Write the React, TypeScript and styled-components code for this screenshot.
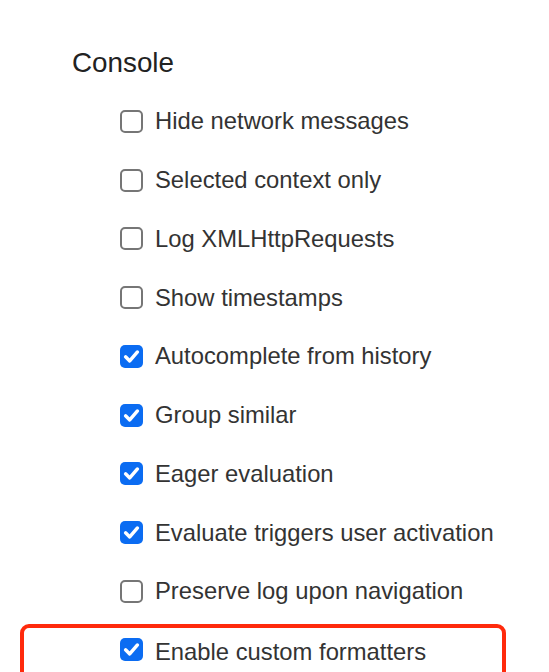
import React from 'react';
import styled, { createGlobalStyle } from 'styled-components';

const GlobalStyle = createGlobalStyle`
  html, body {
    margin: 0;
    padding: 0;
    background: #fff;
    overflow: hidden;
  }
  body {
    font-family: 'Liberation Sans', Arial, Helvetica, sans-serif;
    color: #303030;
  }
`;

type Setting = {
  label: string;
  checked: boolean;
  highlight?: boolean;
};

const settings: Setting[] = [
  { label: 'Hide network messages', checked: false },
  { label: 'Selected context only', checked: false },
  { label: 'Log XMLHttpRequests', checked: false },
  { label: 'Show timestamps', checked: false },
  { label: 'Autocomplete from history', checked: true },
  { label: 'Group similar', checked: true },
  { label: 'Eager evaluation', checked: true },
  { label: 'Evaluate triggers user activation', checked: true },
  { label: 'Preserve log upon navigation', checked: false },
  { label: 'Enable custom formatters', checked: true, highlight: true }
];

const Page = styled.div`
  width: 549px;
  height: 672px;
  overflow: hidden;
  padding-left: 72px;
  box-sizing: border-box;
`;

const Heading = styled.h2`
  margin: 0;
  margin-top: 33px;
  font-size: 27.8px;
  font-weight: 400;
  line-height: 59px;
  color: #222;
`;

const List = styled.div`
  display: flex;
  flex-direction: column;
  padding-left: 48px;
`;

const Row = styled.label`
  display: flex;
  align-items: center;
  gap: 12px;
  height: 58.75px;
  font-size: 23.8px;
  color: #333;
  cursor: pointer;
`;

const HighlightBox = styled.div`
  margin-left: -100px;
  margin-top: 3px;
  width: 486px;
  box-sizing: border-box;
  border: 4px solid #ff2a0c;
  border-radius: 9px;
  padding-left: 96px;

  ${Row} {
    height: 44px;
    padding-bottom: 30px;
    align-items: flex-start;
    padding-top: 10px;
  }
`;

const Box = styled.span<{ $checked: boolean }>`
  display: inline-flex;
  align-items: center;
  justify-content: center;
  flex-shrink: 0;
  width: 23px;
  height: 23px;
  box-sizing: border-box;
  border-radius: 5px;
  border: ${p => (p.$checked ? 'none' : '2px solid #767676')};
  background: ${p => (p.$checked ? '#0b6cf2' : '#fff')};
`;

const CheckBox: React.FC<{ checked: boolean }> = ({ checked }) => (
  <Box $checked={checked}>
    {checked && (
      <svg width="19" height="19" viewBox="0 0 16 16">
        <path
          d="M3 8.3 L6.5 11.7 L13 4.2"
          fill="none"
          stroke="#fff"
          strokeWidth="2.9"
          strokeLinecap="round"
          strokeLinejoin="round"
        />
      </svg>
    )}
  </Box>
);

const SettingRow: React.FC<{ item: Setting }> = ({ item }) => (
  <Row>
    <CheckBox checked={item.checked} />
    <span>{item.label}</span>
  </Row>
);

const App: React.FC = () => {
  return (
    <Page>
      <GlobalStyle />
      <Heading>Console</Heading>
      <List>
        {settings.map(item =>
          item.highlight ? (
            <HighlightBox key={item.label}>
              <SettingRow item={item} />
            </HighlightBox>
          ) : (
            <SettingRow key={item.label} item={item} />
          )
        )}
      </List>
    </Page>
  );
};

export default App;
